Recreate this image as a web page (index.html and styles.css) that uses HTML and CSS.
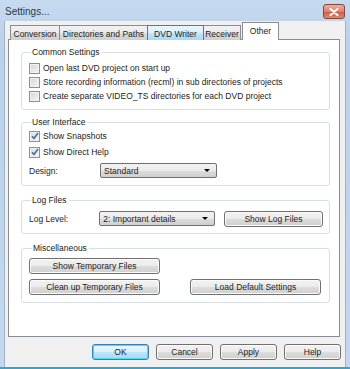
FILE: index.html
```html
<!DOCTYPE html>
<html>
<head>
	<title>Settings...</title>
	<link rel="stylesheet" href="styles.css">
</head>
<body>
	<div class="window">
		<div class="titlebar">
			<span class="title">Settings...</span>
			<span class="close-btn">
				<svg width="10" height="8" viewBox="0 0 10 8">
					<path d="M1.5 1 L8.5 7 M8.5 1 L1.5 7" stroke="#ffffff" stroke-width="2" stroke-linecap="round"/>
				</svg>
			</span>
		</div>

		<div class="client">
			<div class="tabs">
				<span class="tab tab-conv">Conversion</span>
				<span class="tab tab-dirs">Directories and Paths</span>
				<span class="tab tab-dvd hover">DVD Writer</span>
				<span class="tab tab-recv">Receiver</span>
				<span class="tab tab-other active">Other</span>
			</div>

			<div class="panel">
				<fieldset class="group group-common">
					<legend>Common Settings</legend>
					<label class="check-row"><span class="checkbox"></span>Open last DVD project on start up</label>
					<label class="check-row"><span class="checkbox"></span>Store recording information (recml) in sub directories of projects</label>
					<label class="check-row"><span class="checkbox"></span>Create separate VIDEO_TS directories for each DVD project</label>
				</fieldset>

				<fieldset class="group group-ui">
					<legend>User Interface</legend>
					<label class="check-row tall"><span class="checkbox checked">
						<svg width="8" height="8" viewBox="0 0 8 8"><path d="M1 4.2 L3 6.4 L7 1" fill="none" stroke="#4a6bb0" stroke-width="1.6"/></svg>
					</span>Show Snapshots</label>
					<label class="check-row tall"><span class="checkbox checked">
						<svg width="8" height="8" viewBox="0 0 8 8"><path d="M1 4.2 L3 6.4 L7 1" fill="none" stroke="#4a6bb0" stroke-width="1.6"/></svg>
					</span>Show Direct Help</label>
					<div class="field-row">
						<span class="field-label">Design:</span>
						<span class="select">Standard<span class="arrow"></span></span>
					</div>
				</fieldset>

				<fieldset class="group group-log">
					<legend>Log Files</legend>
					<div class="field-row">
						<span class="field-label">Log Level:</span>
						<span class="select">2: Important details<span class="arrow"></span></span>
						<button class="btn btn-log">Show Log Files</button>
					</div>
				</fieldset>

				<fieldset class="group group-misc">
					<legend>Miscellaneous</legend>
					<div class="misc-row">
						<button class="btn btn-wide">Show Temporary Files</button>
					</div>
					<div class="misc-row spread">
						<button class="btn btn-wide">Clean up Temporary Files</button>
						<button class="btn btn-wide">Load Default Settings</button>
					</div>
				</fieldset>
			</div>

			<div class="dialog-buttons">
				<button class="btn btn-dlg default">OK</button>
				<button class="btn btn-dlg">Cancel</button>
				<button class="btn btn-dlg">Apply</button>
				<button class="btn btn-dlg">Help</button>
			</div>
		</div>
	</div>
</body>
</html>
```

FILE: styles.css
```css
body {
	margin: 0;
	padding: 0;
	font-family: "Liberation Sans", Arial, sans-serif;
	font-size: 8.5px;
	color: #1c1c1c;
}

.window {
	width: 350px;
	height: 369px;
	box-sizing: border-box;
	display: flex;
	flex-direction: column;
	background: linear-gradient(#c6daf0, #bcd2ea 40px, #c3d8ee);
	border-bottom: 2px solid #3aa3c8;
	overflow: hidden;
}

.titlebar {
	height: 21px;
	display: flex;
	align-items: center;
	justify-content: space-between;
	padding: 0 5px 0 5px;
	flex-shrink: 0;
}

.title {
	font-size: 10px;
	color: #2a3a4e;
	margin-top: 1px;
}

.close-btn {
	width: 20px;
	height: 13px;
	margin-top: 2px;
	border: 1px solid #8a4538;
	border-radius: 3px;
	background: linear-gradient(#eab0a2, #dc826f 50%, #cc5a44 51%, #dc8a72);
	display: flex;
	align-items: center;
	justify-content: center;
}

.client {
	flex: 1;
	margin: 0 4px 0 4px;
	padding: 2px 5px 0 3px;
	background-color: #f0f0f0;
	border-left: 1px solid #9db4cf;
	border-right: 1px solid #9db4cf;
	display: flex;
	flex-direction: column;
}

.tabs {
	height: 17px;
	display: flex;
	align-items: flex-end;
	padding-left: 2px;
	position: relative;
	z-index: 1;
	margin-bottom: -1px;
}

.tab {
	height: 15px;
	box-sizing: border-box;
	border: 1px solid #898c95;
	border-bottom: none;
	border-left: none;
	background: linear-gradient(#f2f2f2, #ebebeb 50%, #dddddd 51%, #cfcfcf);
	display: flex;
	align-items: center;
	justify-content: center;
	padding-top: 1px;
}

.tab-conv {
	width: 50px;
	border-left: 1px solid #898c95;
}

.tab-dirs {
	width: 88px;
}

.tab-dvd {
	width: 56px;
}

.tab-recv {
	width: 37px;
}

.tab.hover {
	background: linear-gradient(#eaf6fd, #d9f0fc 50%, #bee6fd 51%, #a7d9f5);
	border: 1px solid #3c7fb1;
	border-bottom: none;
	margin-left: -1px;
	width: 57px;
}

.tab.active {
	width: 37px;
	height: 18px;
	background: #ffffff;
	border: 1px solid #898c95;
	border-bottom: none;
	margin-left: 1px;
	padding-bottom: 2px;
}

.panel {
	height: 298px;
	box-sizing: border-box;
	background-color: #ffffff;
	border: 1px solid #898c95;
	padding: 7px 9px 0 12px;
	display: flex;
	flex-direction: column;
}

.group {
	margin: 0;
	border: 1px solid #d5dfe5;
	border-radius: 3px;
	padding: 0 6px 0 6px;
	min-width: 0;
}

.group legend {
	padding: 0 2px 0 1px;
	margin-left: 3px;
	line-height: 10px;
	color: #1a1a1a;
}

.group-common {
	padding-top: 4px;
	padding-bottom: 6px;
}

.group-ui {
	margin-top: 7px;
	padding-top: 1px;
	padding-bottom: 6px;
}

.group-log {
	margin-top: 9px;
	padding-top: 5px;
	padding-bottom: 6px;
}

.group-misc {
	margin-top: 9px;
	padding-top: 5px;
	padding-bottom: 7px;
	padding-left: 7px;
}

.check-row {
	display: flex;
	align-items: center;
	height: 14px;
	white-space: nowrap;
}

.check-row.tall {
	height: 16px;
}

.checkbox {
	width: 11px;
	height: 11px;
	box-sizing: border-box;
	border: 1px solid #8e8f8f;
	background: linear-gradient(135deg, #d6d6d6, #f4f4f4);
	box-shadow: inset 0 0 0 1px #f2f2f2;
	margin-right: 3px;
	margin-left: 1px;
	display: flex;
	align-items: center;
	justify-content: center;
}

.checkbox.checked {
	background: linear-gradient(135deg, #dcdcdc, #f8f8f8);
}

.field-row {
	display: flex;
	align-items: center;
	height: 17px;
	margin-top: 2px;
}

.group-log .field-row {
	margin-top: 0;
}

.field-label {
	width: 71px;
	padding-left: 1px;
}

.select {
	width: 117px;
	height: 15px;
	box-sizing: border-box;
	border: 1px solid #707070;
	border-radius: 2px;
	background: linear-gradient(#f2f2f2, #ebebeb 50%, #dddddd 51%, #cfcfcf);
	display: flex;
	align-items: center;
	padding-left: 3px;
	position: relative;
}

.arrow {
	position: absolute;
	right: 6px;
	top: 5px;
	width: 0;
	height: 0;
	border-left: 3px solid transparent;
	border-right: 3px solid transparent;
	border-top: 3px solid #000000;
}

.btn {
	font-family: "Liberation Sans", Arial, sans-serif;
	font-size: 8.5px;
	color: #1c1c1c;
	height: 16px;
	box-sizing: border-box;
	border: 1px solid #707070;
	border-radius: 3px;
	background: linear-gradient(#f2f2f2, #ebebeb 50%, #dddddd 51%, #cfcfcf);
	padding: 0;
	box-shadow: inset 0 0 0 1px #fbfbfb;
}

.btn-log {
	width: 100px;
	margin-left: 9px;
}

.misc-row {
	display: flex;
	height: 16px;
}

.misc-row.spread {
	margin-top: 5px;
	justify-content: space-between;
	padding-right: 2px;
}

.btn-wide {
	width: 131px;
}

.dialog-buttons {
	display: flex;
	justify-content: flex-end;
	gap: 7px;
	margin-top: 7px;
	margin-right: -1px;
}

.btn-dlg {
	width: 57px;
}

.btn-dlg.default {
	border-color: #3c7fb1;
	box-shadow: inset 0 0 0 1px #48d8fb;
	background: linear-gradient(#eaf6fd, #d9f0fc 50%, #bee6fd 51%, #a7d9f5);
}
```
